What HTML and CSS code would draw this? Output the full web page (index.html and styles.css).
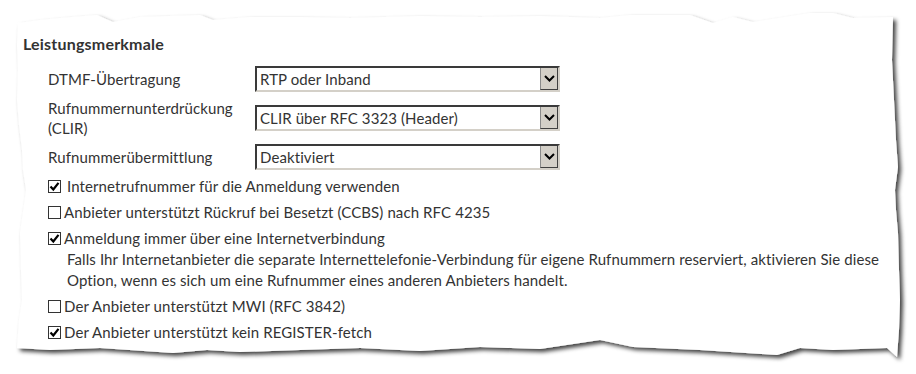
FILE: index.html
```html
<!DOCTYPE html>
<html lang="de">
<head>
<meta charset="utf-8">
<title>Leistungsmerkmale</title>
<link rel="stylesheet" href="styles.css">
</head>
<body>
<div class="sheet">
  <svg class="paper" width="916" height="374" viewBox="0 0 916 374" aria-hidden="true">
    <defs>
      <filter id="sh" x="-5%" y="-5%" width="110%" height="115%">
        <feDropShadow dx="3" dy="3" stdDeviation="2.2" flood-color="#000" flood-opacity="0.75"/>
      </filter>
    </defs>
    <polygon filter="url(#sh)" fill="#fff" points="18,23 40,20 60,18 97,15 113,22 140,17 170,16 200,15 213,20 250,17 300,17 350,18 420,16 480,17 540,16 600,18 630,15 690,15 713,23 733,17 753,22 810,13 833,13 853,18 893,17 892,60 894,100 896,140 898,167 895,190 896,210 898,233 899,270 900,300 899,330 897,357 887,348 833,350 800,348 777,355 700,350 633,347 600,340 540,349 480,347 420,351 360,348 300,350 240,352 207,350 173,353 100,348 50,350 17,348 19,320 22,300 21,270 20,233 24,205 26,190 23,170 22,150 19,125 17,100 18,70 17,45"/>
  </svg>

  <div class="content">
    <h2 class="title">Leistungsmerkmale</h2>

    <div class="form-row">
      <label class="lbl">DTMF-Übertragung</label>
      <div class="select"><span class="sel-text">RTP oder Inband</span><span class="sel-arrow"><svg width="11" height="7" viewBox="0 0 11 7"><path d="M1 1 L5.5 5.5 L10 1" fill="none" stroke="#000" stroke-width="2"/></svg></span></div>
    </div>

    <div class="form-row tall">
      <label class="lbl">Rufnummernunterdrückung<br>(CLIR)</label>
      <div class="select"><span class="sel-text">CLIR über RFC 3323 (Header)</span><span class="sel-arrow"><svg width="11" height="7" viewBox="0 0 11 7"><path d="M1 1 L5.5 5.5 L10 1" fill="none" stroke="#000" stroke-width="2"/></svg></span></div>
    </div>

    <div class="form-row">
      <label class="lbl">Rufnummerübermittlung</label>
      <div class="select"><span class="sel-text">Deaktiviert</span><span class="sel-arrow"><svg width="11" height="7" viewBox="0 0 11 7"><path d="M1 1 L5.5 5.5 L10 1" fill="none" stroke="#000" stroke-width="2"/></svg></span></div>
    </div>

    <ul class="checks">
      <li class="check wide"><span class="box"><svg width="11" height="11" viewBox="0 0 11 11"><path d="M1.5 5.5 L4.3 8.5 L9.5 1.8" fill="none" stroke="#000" stroke-width="2.2"/></svg></span><span>Internetrufnummer für die Anmeldung verwenden</span></li>
      <li class="check"><span class="box"></span><span>Anbieter unterstützt Rückruf bei Besetzt (CCBS) nach RFC 4235</span></li>
      <li class="check with-desc"><span class="box"><svg width="11" height="11" viewBox="0 0 11 11"><path d="M1.5 5.5 L4.3 8.5 L9.5 1.8" fill="none" stroke="#000" stroke-width="2.2"/></svg></span><span>Anmeldung immer über eine Internetverbindung</span></li>
      <li class="desc">Falls Ihr Internetanbieter die separate Internettelefonie-Verbindung für eigene Rufnummern reserviert, aktivieren Sie diese Option, wenn es sich um eine Rufnummer eines anderen Anbieters handelt.</li>
      <li class="check"><span class="box"></span><span>Der Anbieter unterstützt MWI (RFC 3842)</span></li>
      <li class="check"><span class="box"><svg width="11" height="11" viewBox="0 0 11 11"><path d="M1.5 5.5 L4.3 8.5 L9.5 1.8" fill="none" stroke="#000" stroke-width="2.2"/></svg></span><span>Der Anbieter unterstützt kein REGISTER-fetch</span></li>
    </ul>
  </div>
</div>
</body>
</html>
```

FILE: styles.css
```css
html, body {
  margin: 0;
  padding: 0;
  background: #fff;
}
body {
  width: 916px;
  height: 374px;
  overflow: hidden;
  font-family: Lato, "Liberation Sans", sans-serif;
  font-size: 15px;
  letter-spacing: 0.1px;
  color: #333;
}
.sheet {
  position: relative;
  width: 916px;
  height: 374px;
}
.paper {
  position: absolute;
  left: 0;
  top: 0;
}
.content {
  position: relative;
  padding: 34px 0 0 23px;
}
.title {
  margin: 0 0 12px 0;
  font-size: 16px;
  letter-spacing: 0.2px;
  font-weight: bold;
  line-height: 20px;
}
.form-row {
  display: grid;
  grid-template-columns: 207px 305px;
  align-items: center;
  margin: 0 0 6px 25px;
  min-height: 26px;
}
.form-row.tall {
  min-height: 40px;
}
.lbl {
  line-height: 20px;
}
.select {
  display: flex;
  align-items: center;
  height: 26px;
  box-sizing: border-box;
  border-top: 2px solid #3a3a3a;
  border-left: 2px solid #3a3a3a;
  border-right: 2px solid #d4d0c8;
  border-bottom: 2px solid #d4d0c8;
  background: #fff;
  padding-left: 3px;
}
.sel-text {
  flex: 1;
  white-space: nowrap;
}
.sel-arrow {
  display: flex;
  align-items: center;
  justify-content: center;
  align-self: stretch;
  width: 18px;
  box-sizing: border-box;
  background: #d4d0c8;
  border-left: 1px solid #8a8a8a;
  border-right: 1px solid #404040;
  border-bottom: 1px solid #404040;
}
.checks {
  list-style: none;
  margin: 3px 0 0 25px;
  padding: 0;
}
.check {
  display: flex;
  align-items: center;
  line-height: 21px;
  margin-bottom: 5px;
}
.check.with-desc {
  margin-bottom: 0;
}
.box {
  display: flex;
  align-items: center;
  justify-content: center;
  width: 13px;
  height: 13px;
  box-sizing: border-box;
  border: 1px solid #333;
  background: #fff;
  margin-right: 3px;
}
.check.wide .box {
  margin-right: 6px;
}
.desc {
  padding-left: 19px;
  line-height: 21px;
  margin-bottom: 5px;
  width: 826px;
}
```
